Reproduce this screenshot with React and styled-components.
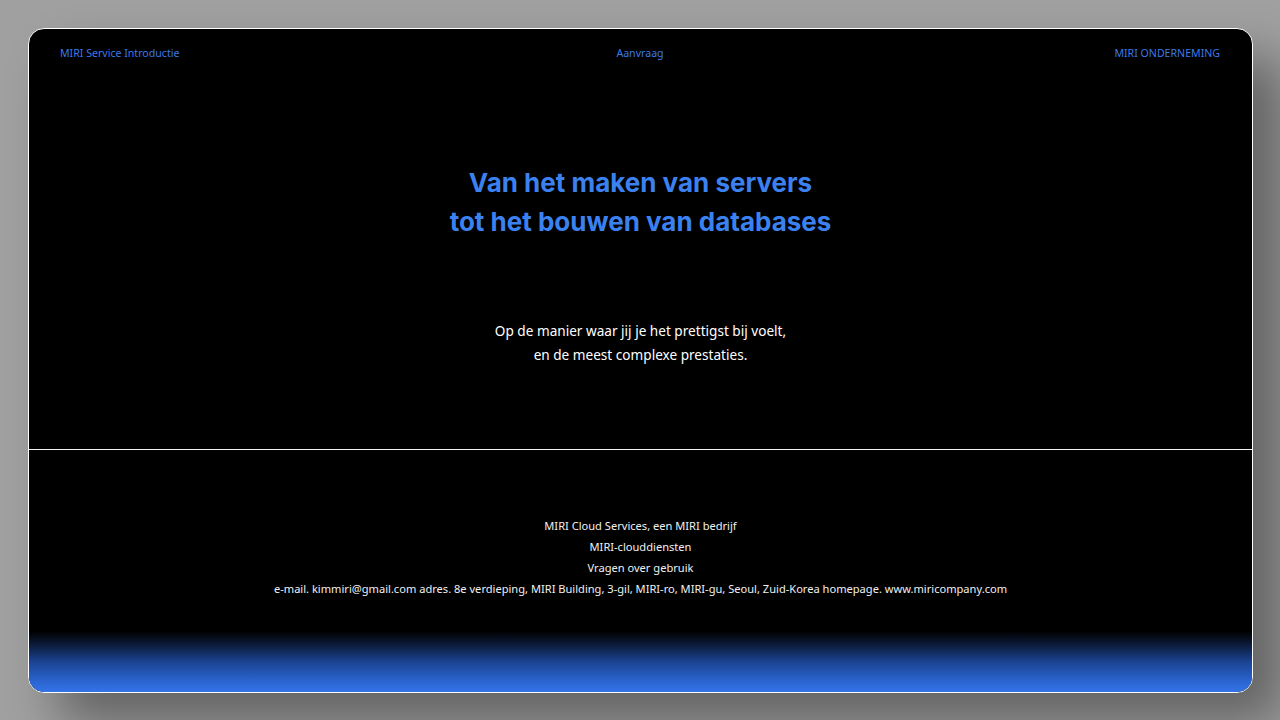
import React from "react";
import styled, { createGlobalStyle } from "styled-components";

const Global = createGlobalStyle`
  * { box-sizing: border-box; }
  html, body { margin: 0; padding: 0; }
  body {
    background: #a0a0a0;
    font-family: "Noto Sans", "Open Sans", sans-serif;
    height: 720px;
    overflow: hidden;
  }
`;

const Page = styled.div`
  padding: 28px 27px 27px 28px;
  height: 720px;
`;

const Card = styled.main`
  height: 665px;
  background: #000;
  border: 1px solid #ffffff;
  border-radius: 16px;
  overflow: hidden;
  display: flex;
  flex-direction: column;
  box-shadow: 30px 30px 50px rgba(0, 0, 0, 0.38);
`;

const Nav = styled.nav`
  height: 47px;
  padding: 0 32px 0 31px;
  display: grid;
  grid-template-columns: 1fr auto 1fr;
  align-items: center;
`;

const NavLink = styled.a`
  font-size: 10.6px;
  color: #3b7ae8;
  text-decoration: none;
  cursor: pointer;
  justify-self: ${(p) => p.$align || "center"};
`;

const Hero = styled.section`
  display: flex;
  flex-direction: column;
  align-items: center;
  text-align: center;
  padding-top: 87px;
  height: 374px;
  border-bottom: 1px solid #f4f4f4;
`;

const Title = styled.h1`
  margin: 0;
  font-family: Inter, "Noto Sans", sans-serif;
  font-weight: 700;
  font-size: 26px;
  line-height: 39px;
  color: #3b82f0;
`;

const Lead = styled.p`
  margin: 78px 0 0;
  font-size: 13.6px;
  line-height: 24px;
  color: #ffffff;
`;

const Footer = styled.footer`
  flex: 1;
  display: flex;
  flex-direction: column;
`;

const Info = styled.div`
  padding-top: 65px;
  text-align: center;
  color: #f0f0f0;
  font-size: 11.1px;
  line-height: 21px;
`;

const Glow = styled.div`
  margin-top: auto;
  height: 61px;
  background: linear-gradient(
    to bottom,
    #000000 0%,
    #0a1833 20%,
    #1a4290 50%,
    #2a62cc 80%,
    #3474e8 100%
  );
`;

export default function App() {
  return (
    <>
      <Global />
      <Page>
        <Card>
          <Nav>
            <NavLink $align="start">MIRI Service Introductie</NavLink>
            <NavLink>Aanvraag</NavLink>
            <NavLink $align="end">MIRI ONDERNEMING</NavLink>
          </Nav>
          <Hero>
            <Title>
              Van het maken van servers
              <br />
              tot het bouwen van databases
            </Title>
            <Lead>
              Op de manier waar jij je het prettigst bij voelt,
              <br />
              en de meest complexe prestaties.
            </Lead>
          </Hero>
          <Footer>
            <Info>
              <div>MIRI Cloud Services, een MIRI bedrijf</div>
              <div>MIRI-clouddiensten</div>
              <div>Vragen over gebruik</div>
              <div>
                e-mail. kimmiri@gmail.com adres. 8e verdieping, MIRI Building,
                3-gil, MIRI-ro, MIRI-gu, Seoul, Zuid-Korea homepage.
                www.miricompany.com
              </div>
            </Info>
            <Glow />
          </Footer>
        </Card>
      </Page>
    </>
  );
}
